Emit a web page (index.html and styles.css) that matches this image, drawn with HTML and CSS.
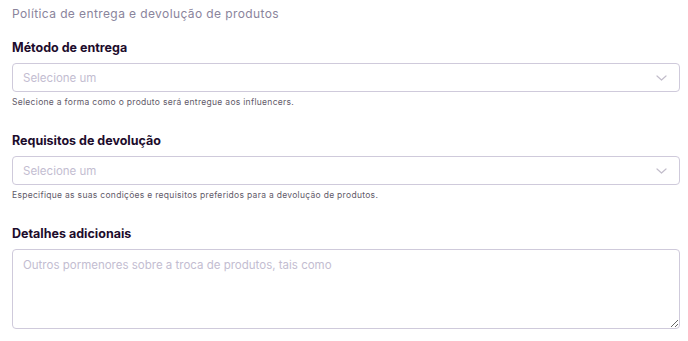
FILE: index.html
```html
<!DOCTYPE html>
<html lang="pt">
<head>
    <meta charset="UTF-8">
    <meta name="viewport" content="width=device-width, initial-scale=1.0">
    <title>Política de entrega e devolução</title>
    <link rel="stylesheet" href="styles.css">
</head>
<body>

    <div class="form">
        <p class="section-title">Política de entrega e devolução de produtos</p>

        <div class="field">
            <label for="delivery">Método de entrega</label>
            <div class="select" id="delivery">
                <span class="placeholder">Selecione um</span>
                <svg class="chevron" width="11" height="6" viewBox="0 0 11 6"><path d="M1 1l4.5 4L10 1" fill="none" stroke="#c2bdcb" stroke-width="1.2" stroke-linecap="round" stroke-linejoin="round"/></svg>
            </div>
            <p class="hint">Selecione a forma como o produto será entregue aos influencers.</p>
        </div>

        <div class="field">
            <label for="returns">Requisitos de devolução</label>
            <div class="select" id="returns">
                <span class="placeholder">Selecione um</span>
                <svg class="chevron" width="11" height="6" viewBox="0 0 11 6"><path d="M1 1l4.5 4L10 1" fill="none" stroke="#c2bdcb" stroke-width="1.2" stroke-linecap="round" stroke-linejoin="round"/></svg>
            </div>
            <p class="hint">Especifique as suas condições e requisitos preferidos para a devolução de produtos.</p>
        </div>

        <div class="field">
            <label for="details">Detalhes adicionais</label>
            <textarea id="details" placeholder="Outros pormenores sobre a troca de produtos, tais como"></textarea>
        </div>
    </div>

</body>
</html>
```

FILE: styles.css
```css
* {
    margin: 0;
    padding: 0;
    box-sizing: border-box;
}

body {
    font-family: 'Inter', 'Noto Sans', sans-serif;
    background-color: #fff;
    padding: 6px 8px 0 12px;
}

.form {
    width: 668px;
}

.section-title {
    font-size: 12px;
    letter-spacing: 0.4px;
    color: #8a849c;
    line-height: 15px;
    margin-bottom: 19px;
}

.field {
    margin-bottom: 26px;
}

label {
    display: block;
    font-size: 12.5px;
    font-weight: 700;
    color: #1d0c2c;
    line-height: 16px;
    margin-bottom: 7px;
}

.select {
    display: flex;
    justify-content: space-between;
    align-items: center;
    height: 29px;
    padding: 0 12px 0 10px;
    border: 1px solid #cfcadb;
    border-radius: 4px;
}

.placeholder {
    font-size: 11.5px;
    color: #c3bdd1;
}

.hint {
    font-size: 8.5px;
    letter-spacing: 0.3px;
    color: #5f5a69;
    margin-top: 5px;
    line-height: 10px;
}

textarea {
    display: block;
    width: 100%;
    height: 80px;
    padding: 8px 10px;
    border: 1px solid #cfcadb;
    border-radius: 4px;
    font-family: inherit;
    font-size: 11.5px;
    outline: none;
    resize: vertical;
}

textarea::placeholder {
    color: #c3bdd1;
}
```
